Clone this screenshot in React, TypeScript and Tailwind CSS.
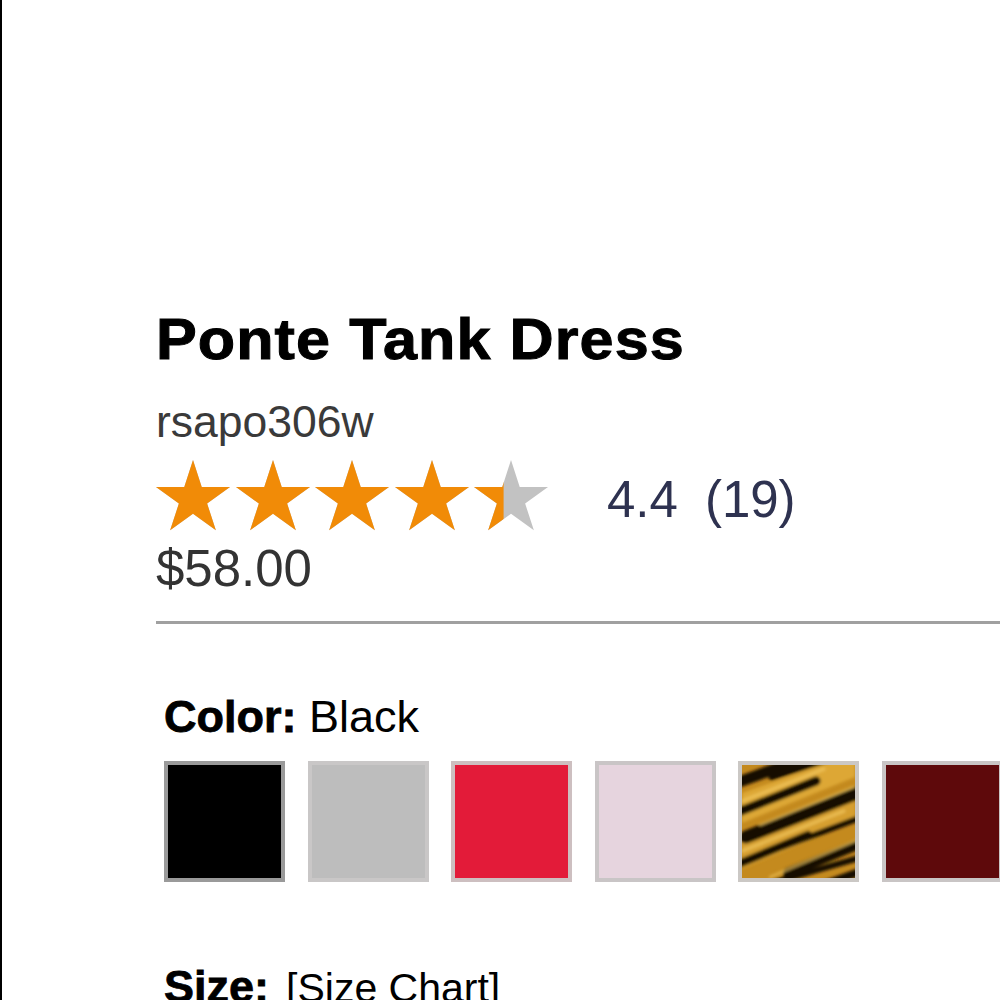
const STAR =
  '37,0 45.73,26.88 74,26.88 51.13,43.49 59.87,70.37 37,53.76 14.13,70.37 22.87,43.49 0,26.88 28.27,26.88';

function Star({ fill }: { fill: number }) {
  const id = `star-clip-${Math.round(fill * 100)}`;
  return (
    <svg width="74" height="71" viewBox="0 0 74 71" className="shrink-0">
      <defs>
        <clipPath id={id}>
          <rect x="0" y="0" width={74 * fill} height="71" />
        </clipPath>
      </defs>
      <polygon points={STAR} fill="#c2c2c2" />
      <polygon points={STAR} fill="#f18b07" clipPath={`url(#${id})`} />
    </svg>
  );
}

function TigerSwatch() {
  return (
    <svg width="113" height="113" viewBox="0 0 113 113" className="block">
      <defs>
        <filter id="soft" x="-10%" y="-10%" width="120%" height="120%">
          <feGaussianBlur stdDeviation="1.8" />
        </filter>
      </defs>
      <rect width="113" height="113" fill="#c48a1e" />
      <g filter="url(#soft)">
        <path d="M0 28 L113 -12 L113 12 L0 58 Z" fill="#e2ad3a" opacity="0.85" />
        <path d="M0 78 L113 30 L113 56 L0 104 Z" fill="#d9a232" opacity="0.85" />
        <g stroke="#140e05" strokeLinecap="round" fill="none">
          <path d="M-6 18 L60 -6" strokeWidth="11" />
          <path d="M30 12 L98 -10" strokeWidth="7" />
          <path d="M-6 48 L74 16" strokeWidth="9" />
          <path d="M4 72 L120 26" strokeWidth="13" />
          <path d="M40 82 L120 52" strokeWidth="6" />
          <path d="M-6 100 L66 70" strokeWidth="8" />
          <path d="M46 108 L120 78" strokeWidth="10" />
          <path d="M16 122 L120 92" strokeWidth="6" />
          <path d="M76 122 L120 106" strokeWidth="8" />
        </g>
        <g stroke="#f2c860" strokeLinecap="round" fill="none" opacity="0.75">
          <path d="M0 36 L82 4" strokeWidth="3" />
          <path d="M18 60 L112 22" strokeWidth="2" />
          <path d="M0 86 L102 46" strokeWidth="3" />
          <path d="M28 112 L118 74" strokeWidth="2" />
        </g>
      </g>
    </svg>
  );
}

const swatches = [
  { name: 'Black', className: 'bg-black border-[#9a9a9a]' },
  { name: 'Heather Grey', className: 'bg-[#bdbdbd] border-[#c9c7c7]' },
  { name: 'Red', className: 'bg-[#e31b39] border-[#cdbfc0]' },
  { name: 'Blush', className: 'bg-[#e6d4de] border-[#c9c5c6]' },
  { name: 'Tiger', className: 'bg-[#c98e1c] border-[#cbc8c5]', tiger: true },
  { name: 'Burgundy', className: 'bg-[#5e090b] border-[#c9c5c5]' },
];

export default function App() {
  const rating = 4.4;

  return (
    <div className="h-[1000px] overflow-hidden bg-white border-l-2 border-black font-['Liberation_Sans',Helvetica,Arial,sans-serif]">
      <div className="pt-[310px] pl-[154px]">
        <h1 className="inline-block origin-left scale-x-[1.072] text-[57px] leading-[58px] font-bold tracking-[1px] text-black whitespace-nowrap [-webkit-text-stroke:1px_black]">
          Ponte Tank Dress
        </h1>
        <p className="mt-[32px] text-[44.5px] leading-[44px] text-[#3a3a3a]">rsapo306w</p>

        <div className="mt-[16px] flex items-start">
          <div className="flex gap-[5.5px]">
            {[1, 2, 3, 4, 5].map((n) => (
              <Star key={n} fill={Math.max(0, Math.min(1, rating - (n - 1)))} />
            ))}
          </div>
          <div className="ml-[59px] mt-[14px] flex gap-[27px] text-[51px] leading-[51px] text-[#2e3250]">
            <span>4.4</span>
            <span>(19)</span>
          </div>
        </div>

        <p className="mt-[13px] text-[51px] leading-[50px] text-[#333333]">$58.00</p>

        <div className="mt-[27px] h-[3px] bg-[#a0a0a0]" />

        <div className="pl-[8px]">
          <p className="mt-[70px] text-[45px] leading-[45px] text-black">
            <span className="font-bold [-webkit-text-stroke:0.8px_black]">Color:</span> Black
          </p>

          <div className="mt-[22px] flex gap-[22.5px]">
            {swatches.map((s) => (
              <div
                key={s.name}
                title={s.name}
                className={`w-[121px] h-[121px] shrink-0 border-4 ${s.className}`}
              >
                {s.tiger && <TigerSwatch />}
              </div>
            ))}
          </div>

          <p className="mt-[82px] flex items-baseline leading-[45px] text-black whitespace-nowrap">
            <span className="text-[45px] font-bold [-webkit-text-stroke:0.8px_black]">Size:</span>
            <span className="ml-[17px] text-[41px]">[Size Chart]</span>
          </p>
        </div>
      </div>
    </div>
  );
}
